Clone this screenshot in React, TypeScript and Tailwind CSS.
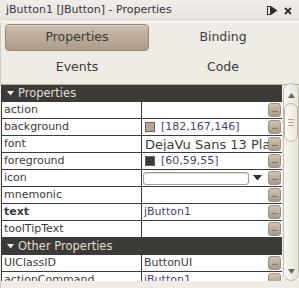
import type { ReactNode } from 'react';

type Row = { name: string; bold?: boolean; value?: ReactNode };

const DotsButton = () => (
  <div className="shrink-0 mr-[1px] w-[13px] h-[14px] rounded-[3px] border border-[#9d8f7a] bg-gradient-to-b from-[#cfc4b4] to-[#a89a86] flex items-end justify-center pb-[2px]">
    <span className="text-[8px] leading-none text-[#3c3b37] tracking-[-0.5px]">...</span>
  </div>
);

const Swatch = ({ color }: { color: string }) => (
  <span className="w-[10px] h-[10px] border border-[#6b6358] shrink-0 mr-[6px]" style={{ background: color }} />
);

const propRows: Row[] = [
  { name: 'action' },
  {
    name: 'background',
    value: (
      <span className="flex items-center pl-[3px]">
        <Swatch color="#b6a792" />
        <span className="text-[#4a3f78]">[182,167,146]</span>
      </span>
    ),
  },
  { name: 'font', value: <span className="pl-[3px] whitespace-nowrap text-[13px] leading-none">DejaVu Sans 13 Plain</span> },
  {
    name: 'foreground',
    value: (
      <span className="flex items-center pl-[3px]">
        <Swatch color="#3c3b37" />
        <span className="text-[#4a3f78]">[60,59,55]</span>
      </span>
    ),
  },
  {
    name: 'icon',
    value: (
      <span className="flex items-center pl-[1px] w-full">
        <span className="w-[106px] h-[13px] rounded-[3px] border border-[#a89a80] bg-white shadow-[inset_0_1px_1px_rgba(0,0,0,0.15)]" />
        <svg width="9" height="6" viewBox="0 0 9 6" className="ml-[4px]">
          <path d="M0 0 H9 L4.5 5.5 Z" fill="#2e2d2a" />
        </svg>
      </span>
    ),
  },
  { name: 'mnemonic' },
  { name: 'text', bold: true, value: <span className="pl-[2px] text-[#4a3f78]">jButton1</span> },
  { name: 'toolTipText' },
];

const otherRows: Row[] = [
  { name: 'UIClassID', value: <span className="pl-[2px]">ButtonUI</span> },
  { name: 'actionCommand', value: <span className="pl-[2px] text-[#4a3f78]">jButton1</span> },
];

function PropRow({ row }: { row: Row }) {
  return (
    <div className="flex h-[17px] shrink-0 border-b border-[#3c3b37] bg-white">
      <div className={`w-[140px] shrink-0 border-r border-[#3c3b37] pl-[2px] flex items-center ${row.bold ? 'font-bold' : ''}`}>
        {row.name}
      </div>
      <div className="flex-1 min-w-0 flex items-center">
        <div className="flex-1 min-w-0 overflow-hidden flex items-center">{row.value}</div>
        <DotsButton />
      </div>
    </div>
  );
}

function Section({ title }: { title: string }) {
  return (
    <div className="flex items-center h-[17px] shrink-0 bg-[#3c3b37] text-[#e2ddd3] text-[11.5px] pl-[5px]">
      <svg width="7" height="5" viewBox="0 0 7 5" className="mr-[4px]">
        <path d="M0 0 H7 L3.5 4.5 Z" fill="#f4f2ee" />
      </svg>
      {title}
    </div>
  );
}

export default function App() {
  return (
    <div className="w-[299px] h-[288px] bg-[#efebe5] flex flex-col overflow-hidden font-['DejaVu_Sans',sans-serif] text-[#3c3b37]">
      {/* title bar */}
      <div className="h-[22px] shrink-0 flex items-center pl-[6px] pr-[7px] bg-gradient-to-b from-[#f1eee9] to-[#e6e2db] border-b border-white">
        <span className="flex-1 text-[11px] text-[#3a3346]">jButton1 [JButton] - Properties</span>
        <svg width="11" height="9" viewBox="0 0 11 9" className="mr-[6px]">
          <rect x="0.5" y="0.5" width="3" height="8" fill="none" stroke="#2e2d2a" />
          <path d="M4 0 L10.5 4.5 L4 9 Z" fill="#2e2d2a" />
        </svg>
        <svg width="8" height="8" viewBox="0 0 8 8">
          <path d="M1 1 L7 7 M7 1 L1 7" stroke="#2e2d2a" strokeWidth="1.8" />
        </svg>
      </div>

      {/* tabs */}
      <div className="grid grid-cols-2 gap-x-[2px] gap-y-[3px] px-[4px] pt-[2px] pb-[3px] text-[12.5px] border-b border-[#b9ab94] border-l border-l-[#d2c9ba]">
        <div className="h-[27px] rounded-[4px] border border-[#958773] bg-gradient-to-b from-[#cbbfae] to-[#ab9c87] shadow-[inset_0_1px_0_rgba(255,255,255,0.35)] flex items-center justify-center">
          Properties
        </div>
        <div className="h-[27px] flex items-center justify-center">Binding</div>
        <div className="h-[27px] flex items-center justify-center">Events</div>
        <div className="h-[27px] flex items-center justify-center">Code</div>
      </div>

      {/* property sheet */}
      <div className="h-[196px] shrink-0 flex">
        <div className="w-[281px] shrink-0 ml-[1px] overflow-hidden flex flex-col text-[11px] border-l border-[#3c3b37]">
          <Section title="Properties" />
          {propRows.map((r) => (
            <PropRow key={r.name} row={r} />
          ))}
          <Section title="Other Properties" />
          {otherRows.map((r) => (
            <PropRow key={r.name} row={r} />
          ))}
        </div>
        <div className="ml-[1px] -mt-[2px] w-[16px] h-[198px] rounded-[8px] border border-[#c8bead] bg-gradient-to-r from-[#f8f6f2] to-[#e8e3db] flex flex-col items-center pt-[9px] pb-[6px]">
          <svg width="7" height="5" viewBox="0 0 7 5">
            <path d="M3.5 0 L7 5 H0 Z" fill="#6b6860" />
          </svg>
          <div className="mt-[5px] w-[14px] h-[39px] rounded-[7px] border border-[#bfb4a2] bg-gradient-to-r from-[#fbfaf8] to-[#ebe6de] flex flex-col items-center justify-center gap-[2px]">
            <span className="w-[6px] h-px bg-[#b3a893]" />
            <span className="w-[6px] h-px bg-[#b3a893]" />
            <span className="w-[6px] h-px bg-[#b3a893]" />
          </div>
          <div className="flex-1" />
          <svg width="7" height="5" viewBox="0 0 7 5">
            <path d="M0 0 H7 L3.5 5 Z" fill="#6b6860" />
          </svg>
        </div>
      </div>
      <div className="flex-1 border-l border-[#d2c9ba]" />
    </div>
  );
}
